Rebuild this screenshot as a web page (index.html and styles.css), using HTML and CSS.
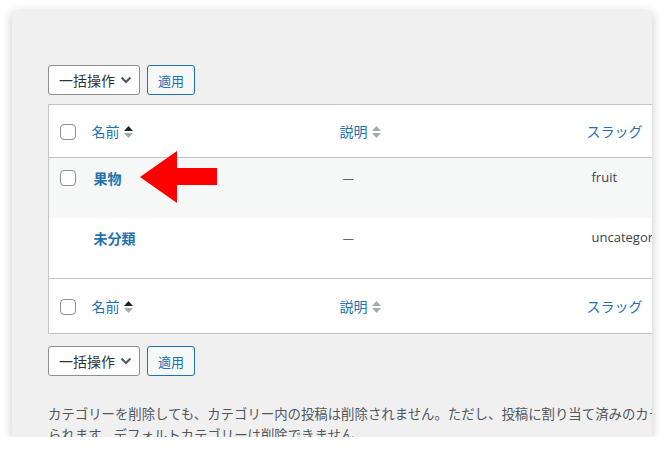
FILE: index.html
```html
<!DOCTYPE html>
<html lang="ja">
<head>
<meta charset="utf-8">
<title>カテゴリー</title>
<link rel="stylesheet" href="styles.css">
</head>
<body>
<div class="screen">
  <div class="wrap">
    <div class="tablenav">
      <div class="bulk-select">一括操作
        <svg class="chevron" width="12" height="8" viewBox="0 0 12 8"><path d="M1.5 1.5 6 6l4.5-4.5" fill="none" stroke="#50575e" stroke-width="2"/></svg>
      </div>
      <button class="button">適用</button>
    </div>

    <table class="terms">
      <thead>
        <tr>
          <td class="col-cb"><span class="cb"></span></td>
          <th class="col-name"><a>名前 <span class="sort asc"><svg width="9" height="12" viewBox="0 0 9 12"><path class="up" d="M0 5 4.5 0 9 5z"/><path class="down" d="M0 7 4.5 12 9 7z"/></svg></span></a></th>
          <th class="col-desc"><a>説明 <span class="sort"><svg width="9" height="12" viewBox="0 0 9 12"><path class="up" d="M0 5 4.5 0 9 5z"/><path class="down" d="M0 7 4.5 12 9 7z"/></svg></span></a></th>
          <th class="col-slug"><a>スラッグ</a></th>
          <th class="col-count"></th>
        </tr>
      </thead>
      <tbody>
        <tr class="alt">
          <td class="col-cb"><span class="cb"></span></td>
          <td class="col-name">
            <strong class="row-title">果物</strong>
            <svg class="pointer" width="78" height="52" viewBox="0 0 78 52"><path d="M0 26 37 0V17H77V34H37V52z" fill="#fe0000"/></svg>
          </td>
          <td class="col-desc">—</td>
          <td class="col-slug">fruit</td>
          <td class="col-count"></td>
        </tr>
        <tr>
          <td class="col-cb"></td>
          <td class="col-name"><strong class="row-title">未分類</strong></td>
          <td class="col-desc">—</td>
          <td class="col-slug">uncategorized</td>
          <td class="col-count"></td>
        </tr>
      </tbody>
      <tfoot>
        <tr>
          <td class="col-cb"><span class="cb"></span></td>
          <th class="col-name"><a>名前 <span class="sort asc"><svg width="9" height="12" viewBox="0 0 9 12"><path class="up" d="M0 5 4.5 0 9 5z"/><path class="down" d="M0 7 4.5 12 9 7z"/></svg></span></a></th>
          <th class="col-desc"><a>説明 <span class="sort"><svg width="9" height="12" viewBox="0 0 9 12"><path class="up" d="M0 5 4.5 0 9 5z"/><path class="down" d="M0 7 4.5 12 9 7z"/></svg></span></a></th>
          <th class="col-slug"><a>スラッグ</a></th>
          <th class="col-count"></th>
        </tr>
      </tfoot>
    </table>

    <div class="tablenav bottom">
      <div class="bulk-select">一括操作
        <svg class="chevron" width="12" height="8" viewBox="0 0 12 8"><path d="M1.5 1.5 6 6l4.5-4.5" fill="none" stroke="#50575e" stroke-width="2"/></svg>
      </div>
      <button class="button">適用</button>
    </div>

    <p class="note">カテゴリーを削除しても、カテゴリー内の投稿は削除されません。ただし、投稿に割り当て済みのカテゴリーのみが削除された場合、その投稿はデフォルトカテゴリー「未分類」に割り当て<br>られます。デフォルトカテゴリーは削除できません。</p>
  </div>
</div>
</body>
</html>
```

FILE: styles.css
```css
html,body{margin:0;padding:0;background:#fff;}
body{padding:11px 12px 0 12px;font-family:"Noto Sans CJK JP","Open Sans",sans-serif;color:#3c434a;}

.screen{
	height:426px;
	background:#f0f0f1;
	overflow:hidden;
	box-shadow:0 2px 10px rgba(0,0,0,.22);
}
.wrap{padding:54px 0 0 36px;width:900px;}

.tablenav{display:flex;gap:7px;height:30px;}
.tablenav.bottom{margin-top:12px;}

.bulk-select{
	box-sizing:border-box;
	width:92px;height:30px;
	display:flex;align-items:center;justify-content:space-between;
	padding:0 7px 0 10px;
	background:#fff;
	border:1px solid #8c8f94;
	border-radius:3px;
	font-size:14px;color:#2c3338;
}
.button{
	box-sizing:border-box;
	height:30px;padding:0 10px;
	background:#f6f7f7;
	border:1px solid #2271b1;
	border-radius:3px;
	color:#2271b1;
	font-family:inherit;font-size:13px;
}

.terms{
	border-collapse:collapse;
	border:1px solid #c3c4c7;
	width:760px;
	margin-top:9px;
	background:#fff;
	table-layout:fixed;
}
.terms th,.terms td{text-align:left;padding:0;font-weight:normal;}
.terms thead th,.terms thead td{height:52px;border-bottom:1px solid #c3c4c7;}
.terms tfoot th,.terms tfoot td{height:54px;border-top:1px solid #c3c4c7;}
.terms th a{display:block;padding:0 8px;color:#2271b1;font-size:14px;}

.col-cb{width:35px;}
.terms .col-cb{padding-left:11px;box-sizing:border-box;}
.col-name{width:248px;}
.col-desc{width:247px;}
.col-slug{width:110px;}

.terms tbody td{vertical-align:top;height:40px;padding:10px 10px 10px 10px;font-size:13px;}
.terms tbody td.col-cb{padding:12px 0 0 11px;}
.terms tbody tr.alt{background:#f6f7f7;}
.terms tbody .col-desc{padding-left:11px;}
.terms tbody .col-slug{padding-left:13px;font-family:"Open Sans","Noto Sans CJK JP",sans-serif;}

.cb{
	display:block;box-sizing:border-box;
	width:16px;height:16px;
	border:1px solid #8c8f94;border-radius:4px;
	background:#fff;
}
.terms thead .cb,.terms tfoot .cb{margin-top:1px;}

.row-title{color:#2271b1;font-size:14px;font-weight:600;}
.terms tbody .col-name{position:relative;}
.pointer{position:absolute;left:56px;top:-7px;}

.sort{display:inline-block;vertical-align:-1px;margin-left:1px;}
.sort path{fill:#a7aaad;}
.sort.asc .up{fill:#1d2327;}
.sort.asc .down{fill:#a7aaad;}

.note{margin:27px 0 0 0;font-size:13.4px;line-height:21px;color:#50575e;white-space:nowrap;}
```
